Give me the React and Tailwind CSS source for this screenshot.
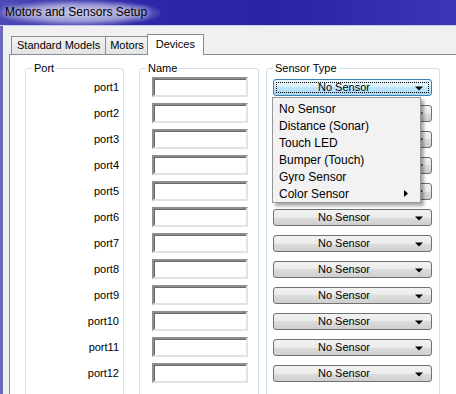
import { Fragment } from "react";

const ports = ["port1", "port2", "port3", "port4", "port5", "port6", "port7", "port8", "port9", "port10", "port11", "port12"];
const sensorTypes = ["No Sensor", "Distance (Sonar)", "Touch LED", "Bumper (Touch)", "Gyro Sensor", "Color Sensor"];

const ui = { fontFamily: '"Liberation Sans", Arial, sans-serif' };

function GroupBox({ title, className, children }) {
  return (
    <div className={`relative border border-[#d5dfe5] rounded-[3px] pt-[5px] pb-[20px] ${className}`}>
      <span className="absolute -top-[8px] left-[6px] bg-white px-[2px] text-[11px] leading-[14px] text-black">
        {title}
      </span>
      {children}
    </div>
  );
}

function Arrow() {
  return (
    <svg width="8" height="5" viewBox="0 0 8 5" className="absolute right-[8px] top-[6px]">
      <path d="M0 0.5 H8 L4 4.5 Z" fill="#000" />
    </svg>
  );
}

function SensorButton({ active }) {
  if (active) {
    return (
      <div className="relative h-[17px] w-[159px] rounded-[3px] border border-[#3c7fb1] bg-[linear-gradient(#eaf6fd_0%,#d9f0fc_50%,#bee6fd_50%,#a7d9f5_100%)]">
        <div className="absolute inset-[2px] border border-dotted border-black" />
        <div className="pr-[17px] text-center text-[11px] leading-[15px] text-black">No Sensor</div>
        <Arrow />
      </div>
    );
  }
  return (
    <div className="relative h-[17px] w-[159px] rounded-[3px] border border-[#707070] bg-[linear-gradient(#f2f2f2_0%,#ebebeb_50%,#dddddd_50%,#cfcfcf_100%)]">
      <div className="pr-[17px] text-center text-[11px] leading-[15px] text-black">No Sensor</div>
      <Arrow />
    </div>
  );
}

export default function App() {
  return (
    <div className="relative flex h-[394px] w-[456px] flex-col overflow-hidden bg-[#f0f0f0]" style={ui}>
      {/* title bar */}
      <div className="relative h-[26px] shrink-0 bg-[linear-gradient(90deg,#4d49b8_0%,#2e28a8_30%,#2a23a3_60%,#3a36b6_100%)] border-b border-[#c9c8ee]">
        <div className="absolute left-0 top-0 h-[26px] w-[160px] bg-[radial-gradient(ellipse_at_center,rgba(205,204,234,0.9)_0%,rgba(190,188,228,0.7)_45%,rgba(140,136,210,0)_75%)]" />
        <span className="absolute left-[5px] top-[5px] text-[12px] leading-[15px] text-black [text-shadow:0_0_6px_#fff]">
          Motors and Sensors Setup
        </span>
      </div>

      {/* window body */}
      <div className="flex flex-1 flex-col border-l-[3px] border-[#6a67bd] bg-[#f0f0f0] pl-[6px]">
        {/* tab strip */}
        <div className="relative z-10 mt-[8px] flex items-end pl-[2px]">
          <div className="flex h-[18px] items-center border border-b-0 border-[#898c95] bg-[linear-gradient(#f3f3f3,#e4e4e4)] px-[5px] text-[11px] text-black">
            Standard Models
          </div>
          <div className="-ml-px flex h-[18px] items-center border border-b-0 border-[#898c95] bg-[linear-gradient(#f3f3f3,#e4e4e4)] px-[4px] text-[11px] text-black">
            Motors
          </div>
          <div className="-mb-px -ml-[2px] flex h-[21px] items-center border border-b-0 border-[#898c95] bg-white px-[8px] pb-[2px] text-[11px] text-black">
            Devices
          </div>
        </div>

        {/* tab page */}
        <div className="flex flex-1 items-start border-l border-t border-[#898c95] bg-white pl-[15px] pt-[13px]">
          <GroupBox title="Port" className="w-[99px]">
            {ports.map((p) => (
              <div key={p} className="flex h-[26px] items-center justify-end pr-[4px] text-[11px] text-black">
                {p}
              </div>
            ))}
          </GroupBox>

          <GroupBox title="Name" className="ml-[15px] w-[120px]">
            {ports.map((p) => (
              <div key={p} className="flex h-[26px] items-center pl-[12px]">
                <div className="h-[20px] w-[96px] border-2 border-b-[#e3e3e3] border-l-[#8e8e8e] border-r-[#e3e3e3] border-t-[#8e8e8e] bg-white shadow-[inset_1px_1px_0_#696969]" />
              </div>
            ))}
          </GroupBox>

          <GroupBox title="Sensor Type" className="ml-[7px] w-[174px]">
            {ports.map((p, i) => (
              <div key={p} className="flex h-[26px] items-center pl-[6px]">
                <SensorButton active={i === 0} />
              </div>
            ))}
          </GroupBox>
        </div>
      </div>

      {/* open dropdown list */}
      <div className="absolute left-[272px] top-[97px] w-[149px] border border-[#979797] bg-[#f2f2f2] shadow-[3px_3px_3px_rgba(0,0,0,0.35)]">
        {sensorTypes.map((s, i) => (
          <Fragment key={s}>
            <div className={`relative flex h-[17px] items-center pl-[6px] text-[12px] text-black ${i === 0 ? "mt-[2px]" : ""}`}>
              {s}
              {i === sensorTypes.length - 1 && (
                <svg width="4" height="7" viewBox="0 0 4 7" className="absolute right-[12px] top-[5px]">
                  <path d="M0 0 L4 3.5 L0 7 Z" fill="#000" />
                </svg>
              )}
            </div>
          </Fragment>
        ))}
      </div>
    </div>
  );
}
